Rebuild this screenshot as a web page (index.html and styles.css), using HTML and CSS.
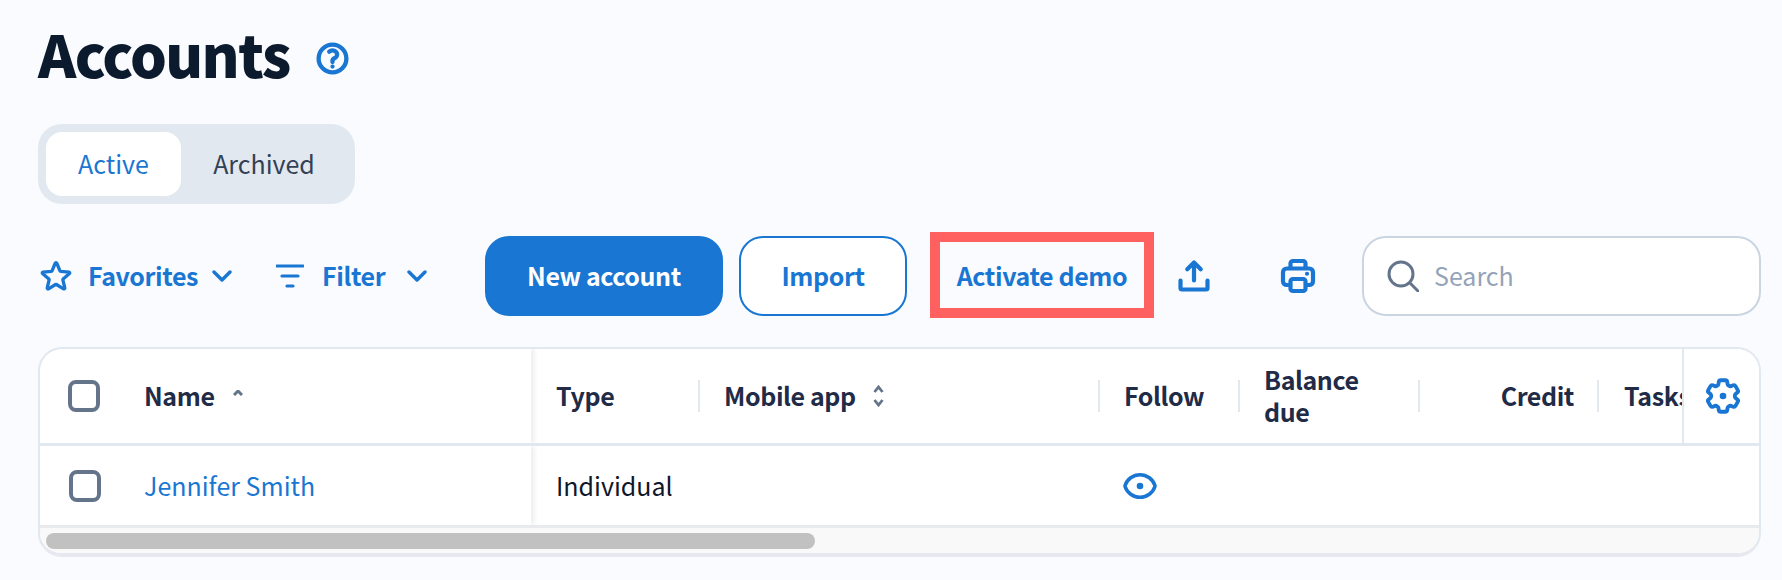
FILE: index.html
```html
<!doctype html>
<html>
<head>
    <meta charset="utf-8" />
    <title>Accounts</title>
    <link rel="stylesheet" href="styles.css">
</head>
<body>
<div class="page">
    <div class="title-row">
        <h1>Accounts</h1>
        <svg class="ico help" viewBox="0 0 24 24"><path d="M9.879 7.519c1.171-1.025 3.071-1.025 4.242 0 1.172 1.025 1.172 2.687 0 3.712-.203.179-.43.326-.67.442-.745.361-1.45.999-1.45 1.827v.75M21 12a9 9 0 1 1-18 0 9 9 0 0 1 18 0Zm-9 5.250h.008v.008H12v-.008Z"/></svg>
    </div>
    <div class="tabs">
        <div class="tab on">Active</div>
        <div class="tab">Archived</div>
    </div>
    <div class="toolbar">
        <div class="drop favorites">
            <svg class="ico star" viewBox="0 0 24 24"><path d="M11.48 3.499a.562.562 0 0 1 1.04 0l2.125 5.111a.563.563 0 0 0 .475.345l5.518.442c.499.04.701.663.321.988l-4.204 3.602a.563.563 0 0 0-.182.557l1.285 5.385a.562.562 0 0 1-.84.61l-4.725-2.885a.562.562 0 0 0-.586 0L6.982 20.54a.562.562 0 0 1-.84-.61l1.285-5.386a.562.562 0 0 0-.182-.557l-4.204-3.602a.562.562 0 0 1 .321-.988l5.518-.442a.563.563 0 0 0 .475-.345L11.48 3.5Z"/></svg>
            <span>Favorites</span>
            <svg class="ico chev" viewBox="0 0 20 12"><path d="M2 2l8 8 8-8"/></svg>
        </div>
        <div class="drop filter">
            <svg class="ico lines" viewBox="0 0 28 24"><path d="M1 2h26M6 12h16M11 22h6"/></svg>
            <span>Filter</span>
            <svg class="ico chev" viewBox="0 0 20 12"><path d="M2 2l8 8 8-8"/></svg>
        </div>
        <button class="btn primary">New account</button>
        <button class="btn outline">Import</button>
        <div class="demo">Activate demo</div>
        <svg class="ico tool export" viewBox="0 0 24 24"><path d="M3 15v5c0 .6.4 1 1 1h16c.6 0 1-.4 1-1v-5M12 15V3M7.500 7.500 12 3l4.500 4.500"/></svg>
        <svg class="ico tool print" viewBox="0 0 24 24"><path d="M7 7V3.500C7 2.700 7.700 2 8.500 2h7c.8 0 1.500.7 1.500 1.500V7M7 18H4.500C3.100 18 2 16.900 2 15.500v-6C2 8.100 3.100 7 4.500 7h15C20.900 7 22 8.100 22 9.500v6c0 1.400-1.100 2.500-2.500 2.500H17M8.500 14h7c.8 0 1.500.7 1.500 1.500v5c0 .8-.7 1.500-1.500 1.500h-7C7.700 22 7 21.300 7 20.500v-5C7 14.700 7.700 14 8.500 14ZM18 10.500h.01"/></svg>
        <div class="search">
            <svg class="ico mag" viewBox="0 0 32 32"><circle cx="14" cy="14" r="12"/><path d="M23 23l8 8"/></svg>
            <span>Search</span>
        </div>
    </div>
    <div class="card">
        <div class="row head">
            <div class="cell name-col">
                <span class="check"></span>
                <span class="txt">Name</span>
                <svg class="sort-up" viewBox="0 0 10 6"><path d="M1 5l4-4 4 4"/></svg>
            </div>
            <div class="cell type-col"><span class="txt">Type</span></div>
            <div class="cell mobile-col">
                <i class="sep"></i><span class="txt">Mobile app</span>
                <svg class="sort-both" viewBox="0 0 12 22"><path d="M2 7l4-5 4 5M2 15l4 5 4-5"/></svg>
            </div>
            <div class="cell follow-col"><i class="sep"></i><span class="txt">Follow</span></div>
            <div class="cell balance-col"><i class="sep"></i><span class="wrap">Balance<br>due</span></div>
            <div class="cell credit-col"><i class="sep"></i><span class="txt right">Credit</span></div>
            <div class="cell tasks-col"><i class="sep"></i><span class="txt">Tasks</span></div>
            <div class="cell gear-col">
                <svg class="ico gear" viewBox="0 0 24 24"><path d="M9.594 3.94c.09-.542.56-.94 1.11-.94h2.593c.55 0 1.02.398 1.11.94l.213 1.281c.063.374.313.686.645.87.074.04.147.083.22.127.325.196.72.257 1.075.124l1.217-.456a1.125 1.125 0 0 1 1.37.49l1.296 2.247a1.125 1.125 0 0 1-.26 1.431l-1.003.827c-.293.241-.438.613-.43.992a7.723 7.723 0 0 1 0 .255c-.008.378.137.75.43.991l1.004.827c.424.35.534.955.26 1.43l-1.298 2.247a1.125 1.125 0 0 1-1.369.491l-1.217-.456c-.355-.133-.75-.072-1.076.124a6.47 6.47 0 0 1-.22.128c-.331.183-.581.495-.644.869l-.213 1.281c-.09.543-.56.94-1.11.94h-2.594c-.55 0-1.019-.398-1.11-.94l-.213-1.281c-.062-.374-.312-.686-.644-.87a6.52 6.52 0 0 1-.22-.127c-.325-.196-.72-.257-1.076-.124l-1.217.456a1.125 1.125 0 0 1-1.369-.49l-1.297-2.247a1.125 1.125 0 0 1 .26-1.431l1.004-.827c.292-.24.437-.613.43-.991a6.932 6.932 0 0 1 0-.255c.007-.38-.138-.751-.43-.992l-1.004-.827a1.125 1.125 0 0 1-.26-1.43l1.297-2.247a1.125 1.125 0 0 1 1.37-.491l1.216.456c.356.133.751.072 1.076-.124.072-.044.146-.086.22-.128.332-.183.582-.495.644-.869l.214-1.28Z"/><circle class="dot" cx="12" cy="12" r="1.900"/></svg>
            </div>
        </div>
        <div class="row body">
            <div class="cell name-col">
                <span class="check"></span>
                <a class="link txt">Jennifer Smith</a>
            </div>
            <div class="cell type-col"><span class="txt">Individual</span></div>
            <div class="cell mobile-col"></div>
            <div class="cell follow-col follow-on">
                <svg class="ico eye" viewBox="0 0 24 24"><path d="M2.036 12.322a1.012 1.012 0 0 1 0-.639C3.423 7.51 7.36 4.5 12 4.5c4.638 0 8.573 3.007 9.963 7.178.07.207.07.431 0 .639C20.577 16.49 16.64 19.500 12 19.500c-4.638 0-8.573-3.007-9.963-7.178Z"/><circle class="dot" cx="12" cy="12" r="2.200"/></svg>
            </div>
        </div>
        <div class="scroll-track"><div class="scroll-thumb"></div></div>
    </div>
</div>
</body>
</html>
```

FILE: styles.css
```css
*{
    margin:0px;
    padding:0px;
    box-sizing:border-box;
}
html,body{
    width:100%;
    height:100%;
    background-color:#f9fbfe;
    overflow:hidden;
}
body{
    font-family:"Noto Sans CJK SC","Liberation Sans",sans-serif;
    font-size:25px;
    line-height:32px;
    color:#1f2b47;
}
.page{
    padding:26px 21px 0px 38px;
}
.ico{
    fill:none;
    stroke:#1976d2;
    stroke-width:2.6;
    stroke-linecap:round;
    stroke-linejoin:round;
    flex:none;
}
.dot{
    fill:#1976d2;
    stroke:none;
}

/* title */
.title-row{
    display:flex;
    align-items:center;
    height:66px;
}
h1{
    font-size:58px;
    line-height:66px;
    font-weight:900;
    letter-spacing:-1.6px;
    color:#0c1a2e;
    margin-top:-12px;
}
.help{
    width:37px;
    height:37px;
    margin-left:24px;
    margin-top:-1px;
    stroke-width:2.8;
}

/* tabs */
.tabs{
    display:flex;
    margin-top:32px;
    width:317px;
    height:80px;
    padding:8px;
    border-radius:24px;
    background-color:#e2e8f0;
}
.tab{
    display:flex;
    align-items:center;
    justify-content:center;
    width:135px;
    height:64px;
    padding-bottom:2px;
    border-radius:16px;
    color:#334155;
}
.tab.on{
    background-color:#fff;
    color:#1976d2;
}
.tab:last-child{
    flex:1;
}

/* toolbar */
.toolbar{
    display:flex;
    align-items:center;
    height:86px;
    margin-top:29px;
}
.drop{
    display:flex;
    align-items:center;
    flex:none;
    color:#1976d2;
    font-weight:700;
    letter-spacing:-.4px;
}
.drop span{
    padding-bottom:3px;
}
.favorites{
    width:194px;
}
.star{
    width:36px;
    height:36px;
    stroke-width:2.2;
}
.favorites span{
    margin-left:14px;
}
.favorites .chev{
    margin-left:auto;
}
.filter{
    width:151px;
    margin-left:44px;
}
.lines{
    width:28px;
    height:24px;
    stroke-width:3.2;
}
.filter span{
    margin-left:18px;
}
.filter .chev{
    margin-left:auto;
}
.chev{
    width:20px;
    height:12px;
    stroke-width:3.4;
}
.btn{
    flex:none;
    height:80px;
    padding-bottom:3px;
    font:inherit;
    font-weight:700;
    letter-spacing:-.4px;
    border-radius:24px;
    border:2px solid #1976d2;
}
.primary{
    width:238px;
    margin-left:58px;
    background-color:#1976d2;
    color:#fff;
}
.outline{
    width:168px;
    margin-left:16px;
    background-color:#fff;
    color:#1976d2;
}
.demo{
    display:flex;
    align-items:center;
    justify-content:center;
    flex:none;
    width:224px;
    height:86px;
    margin-left:23px;
    margin-bottom:2px;
    padding-bottom:1px;
    border:10px solid #ff6060;
    color:#1976d2;
    font-weight:700;
    letter-spacing:-.4px;
}
.tool{
    width:36px;
    height:36px;
    stroke-width:2.8;
}
.export{
    margin-left:22px;
}
.print{
    margin-left:68px;
}
.search{
    display:flex;
    align-items:center;
    flex:none;
    width:399px;
    height:80px;
    margin-left:46px;
    padding-left:23px;
    border:2px solid #cbd5e1;
    border-radius:24px;
    background-color:#fff;
    color:#94a3b8;
}
.search span{
    padding-bottom:3px;
}
.mag{
    width:32px;
    height:32px;
    stroke:#64748b;
    stroke-width:3;
    margin-right:15px;
}

/* table */
.card{
    margin-top:28px;
    width:1723px;
    height:210px;
    border:2px solid #e2e8f0;
    border-bottom:4px solid #e6e9ef;
    border-radius:24px;
    background-color:#fff;
    overflow:hidden;
}
.row{
    display:grid;
    grid-template-columns:491px 167px 400px 140px 180px 179px 85px 79px;
    overflow:hidden;
}
.row.head{
    height:97px;
    border-bottom:3px solid #e2e8f0;
    font-weight:700;
    letter-spacing:-.4px;
}
.row.body{
    height:82px;
    border-bottom:3px solid #e9eaec;
    color:#0f172a;
}
.cell{
    display:flex;
    align-items:center;
    white-space:nowrap;
    overflow:hidden;
}
.txt{
    padding-bottom:2px;
}
.row.head .wrap{
    padding-bottom:2px;
}
.name-col{
    padding-left:28px;
    box-shadow:3px 0px 5px rgba(15,23,42,.08);
    clip-path:inset(0px -8px 0px 0px);
    position:relative;
}
.type-col{
    padding-left:25px;
}
.sep{
    flex:none;
    width:2px;
    height:32px;
    margin-right:24px;
    background-color:#e2e8f0;
}
.check{
    flex:none;
    width:32px;
    height:32px;
    margin-right:44px;
    border:4px solid #64748b;
    border-radius:8px;
    background-color:#fff;
}
.body .check{
    margin-left:1px;
    margin-right:43px;
}
.sort-up{
    width:10px;
    height:6px;
    margin-left:18px;
    margin-bottom:6px;
    fill:none;
    stroke:#64748b;
    stroke-width:3;
}
.sort-both{
    width:13px;
    height:22px;
    margin-left:16px;
    fill:none;
    stroke:#64748b;
    stroke-width:2.8;
}
.wrap{
    white-space:normal;
}
.right{
    margin-left:auto;
    padding-right:23px;
}
.credit-col .sep{
    margin-right:0px;
}
.tasks-col .sep{
    margin-right:25px;
}
.gear-col{
    justify-content:center;
    border-left:2px solid #e2e8f0;
    background-color:#fff;
}
.gear{
    width:42px;
    height:42px;
    stroke-width:2.2;
}
.follow-on{
    padding-left:24px;
}
.eye{
    width:36px;
    height:36px;
    stroke-width:2.4;
}
.link{
    color:#1976d2;
}
.scroll-track{
    height:25px;
    padding:5px 0px 0px 6px;
    background-color:#f9f9f9;
}
.scroll-thumb{
    width:769px;
    height:16px;
    border-radius:8px;
    background-color:#c1c1c1;
}
```
